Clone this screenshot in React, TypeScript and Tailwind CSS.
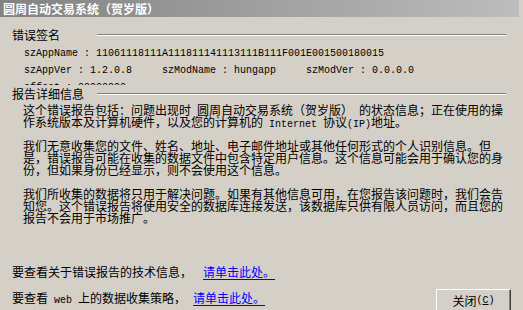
import React from "react";

const M = ({ children }: { children: React.ReactNode }) => (
  <span className="font-['Liberation_Mono',monospace] text-[10px] whitespace-pre">{children}</span>
);

const Etched = () => (
  <div className="flex-1 h-[2px] border-t border-t-[#808080] border-b border-b-white" />
);

export default function App() {
  return (
    <div className="w-[523px] h-[310px] overflow-hidden bg-[#d4d0c8] text-black font-['Noto_Sans_CJK_SC',sans-serif] text-[12px] leading-[12px]">
      <div className="w-[519px] h-[17px] bg-linear-to-r from-[#828282] to-[#bdbdbd] flex items-center pl-[3px] text-white font-bold">
        圆周自动交易系统（贺岁版）
      </div>

      <div className="flex items-center h-[14px] mt-[11px] pl-[12px] pr-[17px]">
        <div className="w-[85px]">错误签名</div>
        <Etched />
      </div>

      <div className="h-[40px] mt-[3px] overflow-hidden pl-[24px] font-['Liberation_Mono',monospace] text-[10px] whitespace-pre">
        <div className="h-[17px] flex items-center">szAppName : 11061118111A111811141113111B111F001E001500180015</div>
        <div className="h-[17px] flex items-center">szAppVer : 1.2.0.8     szModName : hungapp     szModVer : 0.0.0.0</div>
        <div className="h-[17px] flex items-center">offset : 00000000</div>
      </div>

      <div className="flex items-center h-[14px] mt-[2px] pl-[12px] pr-[17px]">
        <div className="w-[85px]">报告详细信息</div>
        <Etched />
      </div>

      <div className="mt-[3px] pl-[23px] whitespace-nowrap">
        <div className="h-[12px]">
          这个错误报告包括：问题出现时<M> </M>圆周自动交易系统（贺岁版）<M> </M>的状态信息；正在使用的操
        </div>
        <div className="h-[12px]">
          作系统版本及计算机硬件，以及您的计算机的<M> Internet </M>协议<M>(IP)</M>地址。
        </div>
        <div className="h-[12px]" />
        <div className="h-[12px]">我们无意收集您的文件、姓名、地址、电子邮件地址或其他任何形式的个人识别信息。但</div>
        <div className="h-[12px]">是，错误报告可能在收集的数据文件中包含特定用户信息。这个信息可能会用于确认您的身</div>
        <div className="h-[12px]">份，但如果身份已经显示，则不会使用这个信息。</div>
        <div className="h-[12px]" />
        <div className="h-[12px]">我们所收集的数据将只用于解决问题。如果有其他信息可用，在您报告该问题时，我们会告</div>
        <div className="h-[12px]">知您。这个错误报告将使用安全的数据库连接发送，该数据库只供有限人员访问，而且您的</div>
        <div className="h-[12px]">报告不会用于市场推广。</div>
      </div>

      <div className="mt-[42px] pl-[12px] flex whitespace-nowrap">
        <span>要查看关于错误报告的技术信息，</span>
        <span className="ml-[11px] text-[#0000ff] underline underline-offset-2">请单击此处。</span>
      </div>

      <div className="mt-[11px] pl-[12px] pr-[12px] flex items-start justify-between whitespace-nowrap">
        <div className="mt-[3px] flex">
          <span>
            要查看<M> web </M>上的数据收集策略，
          </span>
          <span className="ml-[7px] text-[#0000ff] underline underline-offset-2">请单击此处。</span>
        </div>
        <button className="w-[75px] h-[23px] flex items-center justify-center bg-[#d4d0c8] border border-t-white border-l-white border-r-[#404040] border-b-[#404040] shadow-[inset_-1px_-1px_#808080] text-black">
          关闭<M>(</M>
          <M>
            <span className="underline">C</span>
          </M>
          <M>)</M>
        </button>
      </div>
    </div>
  );
}
